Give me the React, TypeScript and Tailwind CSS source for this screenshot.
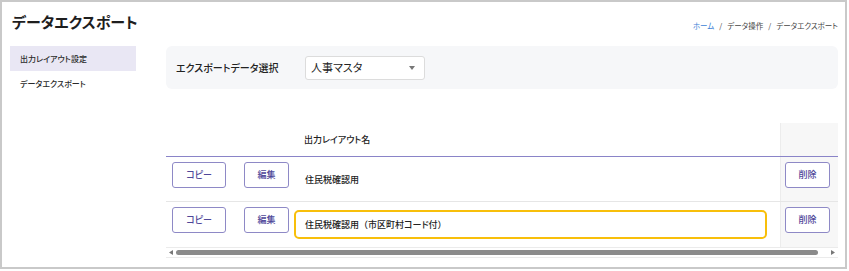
import React from "react";

const font = "font-['Noto_Sans_CJK_JP','Noto_Sans',sans-serif] [font-feature-settings:'palt']";

function Btn({ children, w }: { children: React.ReactNode; w: string }) {
  return (
    <div
      className={`${w} h-[26px] flex items-center justify-center rounded-[3px] border border-[#8e89c6] bg-white text-[9px] font-medium text-[#4f4799]`}
    >
      {children}
    </div>
  );
}

export default function App() {
  const rows = [
    { name: "住民税確認用", focus: false },
    { name: "住民税確認用（市区町村コード付）", focus: true },
  ];
  return (
    <div className={`w-[849px] h-[271px] bg-white ${font}`}>
      <div className="w-[847px] h-[269px] border-2 border-[#c9c9c9] flex flex-col">
        {/* header */}
        <div className="flex items-start justify-between h-[44px]">
          <div className="ml-[10px] mt-[8px] text-[15px] leading-[24px] font-bold text-[#1e1e1e]">
            データエクスポート
          </div>
          <div className="mr-[7px] mt-[18px] text-[7.5px] leading-[12px] text-[#444] flex items-center">
            <span className="text-[#3d7fd6]">ホーム</span>
            <span className="mx-[5px]">/</span>
            <span>データ操作</span>
            <span className="mx-[5px]">/</span>
            <span>データエクスポート</span>
          </div>
        </div>
        <div className="flex flex-1">
          {/* sidebar */}
          <div className="ml-[8px] w-[126px] flex flex-col">
            <div className="h-[25px] bg-[#e9e7f4] flex items-center pl-[10px] text-[8px] font-medium text-[#2a2a2a]">
              出力レイアウト設定
            </div>
            <div className="h-[26px] flex items-center pl-[10px] text-[8px] font-medium text-[#2a2a2a]">
              データエクスポート
            </div>
          </div>
          {/* main */}
          <div className="ml-[30px] w-[672px] flex flex-col">
            <div className="h-[43px] rounded-[6px] bg-[#f6f7f9] flex items-center pl-[10px]">
              <div className="w-[129px] text-[10px] font-medium text-[#222]">
                エクスポートデータ選択
              </div>
              <div className="w-[120px] h-[24px] rounded-[3px] border border-[#dcdcdc] bg-white flex items-center justify-between pl-[5px] pr-[9px]">
                <span className="text-[11px] text-[#222]">人事マスタ</span>
                <svg width="6" height="4" viewBox="0 0 6 4">
                  <path d="M0 0 L6 0 L3 4 Z" fill="#777" />
                </svg>
              </div>
            </div>
            {/* table */}
            <div className="mt-[34px] flex flex-col">
              <div className="grid grid-cols-[69px_59px_486px_58px] h-[34px] border-b border-[#8a84c8]">
                <div />
                <div />
                <div className="flex items-center pl-[10px] text-[9px] font-medium text-[#222]">
                  出力レイアウト名
                </div>
                <div className="bg-[#f7f7f7] border-l border-[#ececec]" />
              </div>
              {rows.map((r, i) => (
                <div
                  key={i}
                  className={`grid grid-cols-[69px_59px_486px_58px] h-[45px] ${i === 0 ? "border-b border-[#e6e6e6]" : ""}`}
                >
                  <div className="flex items-start pt-[5px] pl-[6px]">
                    <Btn w="w-[54px]">コピー</Btn>
                  </div>
                  <div className="flex items-start pt-[5px] pl-[9px]">
                    <Btn w="w-[45px]">編集</Btn>
                  </div>
                  <div className="flex items-center pr-[13px]">
                    {r.focus ? (
                      <div className="w-full h-[29px] rounded-[5px] border-2 border-[#f8bf0a] flex items-center pl-[9px] text-[9px] font-medium text-[#222] [font-feature-settings:normal]">
                        <span className="[font-feature-settings:'palt']">住民税確認用</span>
                        <span>（</span>
                        <span className="[font-feature-settings:'palt']">市区町村コード付</span>
                        <span>）</span>
                      </div>
                    ) : (
                      <div className="pl-[11px] pt-[1px] text-[9px] font-medium text-[#222]">{r.name}</div>
                    )}
                  </div>
                  <div className="bg-[#f7f7f7] border-l border-[#ececec] flex items-start pt-[5px] pl-[4px]">
                    <Btn w="w-[45px]">削除</Btn>
                  </div>
                </div>
              ))}
              {/* scrollbar */}
              <div className="h-[11px] border-y border-[#ebebeb] flex items-center px-[3px] gap-[3px]">
                <svg width="4" height="5" viewBox="0 0 4 5">
                  <path d="M4 0 L4 5 L0 2.5 Z" fill="#777" />
                </svg>
                <div className="flex-1 h-[5px] rounded-full bg-[#8b8b8b] mr-[10px]" />
                <svg width="4" height="5" viewBox="0 0 4 5">
                  <path d="M0 0 L0 5 L4 2.5 Z" fill="#777" />
                </svg>
              </div>
            </div>
          </div>
        </div>
      </div>
    </div>
  );
}
